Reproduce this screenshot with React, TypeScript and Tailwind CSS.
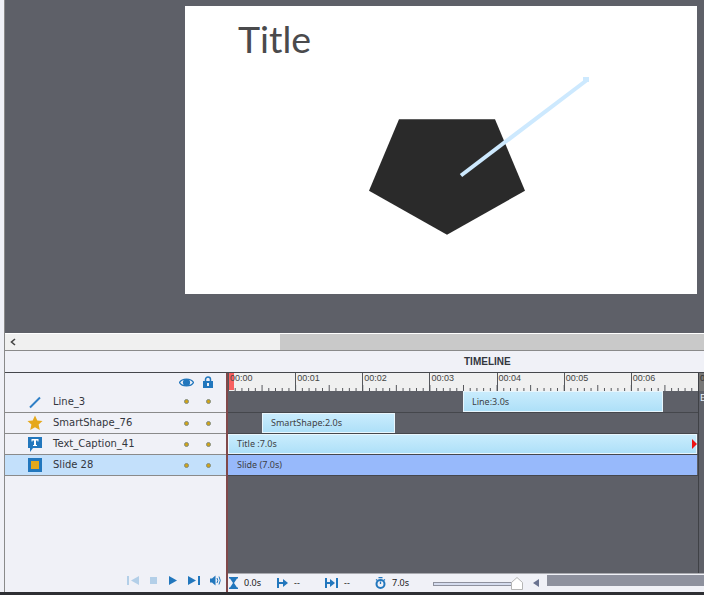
import React from "react";

const uiFont = { fontFamily: '"DejaVu Sans", sans-serif' };
const smallFont = { fontFamily: '"Noto Sans", sans-serif' };

const Dots = () => (
  <div className="ml-auto mr-[15px] flex items-center gap-[17px]">
    <span className="h-[5px] w-[5px] rounded-full border border-[#7f8a80] bg-[#d2a414]" />
    <span className="h-[5px] w-[5px] rounded-full border border-[#7f8a80] bg-[#d2a414]" />
  </div>
);

const LineIcon = () => (
  <svg width="14" height="14" viewBox="0 0 14 14">
    <path d="M2 12.5 L12 2.5" stroke="#2f7fc6" strokeWidth="2" />
  </svg>
);

const StarIcon = () => (
  <svg width="16" height="16" viewBox="0 0 16 16">
    <path d="M8 .5 L10.300 5.500 L15.500 6 L11.600 9.600 L12.800 15 L8 12.200 L3.200 15 L4.400 9.600 L.5 6 L5.700 5.500 Z" fill="#e5a81c" />
  </svg>
);

const CaptionIcon = () => (
  <svg width="16" height="17" viewBox="0 0 16 17">
    <path d="M1 1 H15 V12 H6 L3 16 V12 H1 Z" fill="#2277bd" />
    <path d="M4.5 3 H11.5 V5.5 H10.5 V4.5 H9 V9 H10 V10 H6 V9 H7 V4.5 H5.5 V5.5 H4.5 Z" fill="#fff" />
  </svg>
);

const SlideIcon = () => (
  <div className="flex h-[14px] w-[14px] items-center justify-center bg-[#2277bd]">
    <div className="h-[8px] w-[8px] bg-[#e5a81c]" />
  </div>
);

const rows = [
  { name: "Line_3", icon: <LineIcon />, h: "h-[22px]", selected: false },
  { name: "SmartShape_76", icon: <StarIcon />, h: "h-[21px]", selected: false },
  { name: "Text_Caption_41", icon: <CaptionIcon />, h: "h-[21px]", selected: false },
  { name: "Slide 28", icon: <SlideIcon />, h: "h-[21px]", selected: true },
];

const seconds = ["00:00", "00:01", "00:02", "00:03", "00:04", "00:05", "00:06"];

const Ruler = () => (
  <div className="relative flex h-[18px] w-[470px] shrink-0 bg-[#f0f0f0]">
    <div className="absolute left-0 top-0 h-[17px] w-[6px] bg-[#f86060]" />
    {seconds.map((s) => (
      <div
        key={s}
        className="relative w-[67.14px] shrink-0 border-l border-[#55575c] pl-[1px] text-[9px] leading-[10px] text-[#444]"
        style={{ fontFamily: '"Liberation Sans", sans-serif' }}
      >
        {s}
      </div>
    ))}
    <svg className="absolute bottom-0 left-0" width="470" height="8" viewBox="0 0 470 8">
      {Array.from({ length: 70 }).map((_, i) => (
        <line
          key={i}
          x1={i * 6.714 + 0.5}
          x2={i * 6.714 + 0.5}
          y1={i % 5 === 0 ? 2 : 5}
          y2={8}
          stroke="#55575c"
        />
      ))}
    </svg>
  </div>
);

const Bar = ({ label, className }: { label: string; className: string }) => (
  <div
    className={`flex items-center border border-[#e8f6fd] bg-gradient-to-b from-[#c9ecfd] to-[#aee0f8] pl-[8px] text-[9px] text-[#3d3f45] ${className}`}
    style={smallFont}
  >
    {label}
  </div>
);

const Stat = ({ icon, value, className }: { icon: React.ReactNode; value: string; className: string }) => (
  <div className={`flex items-center gap-[6px] text-[9px] text-[#222] ${className}`} style={smallFont}>
    {icon}
    <span>{value}</span>
  </div>
);

export default function App() {
  return (
    <div className="flex h-[595px] w-[704px] flex-col overflow-hidden bg-[#f0f1f7]" style={uiFont}>
      <div className="flex min-h-0 flex-1 flex-col pl-[4px]">
        <div className="flex min-h-0 flex-1 flex-col border-l border-[#8a8a8a]">
          {/* Stage */}
          <div className="h-[333px] shrink-0 bg-[#5e6068] pl-[180px] pt-[6px]">
            <div className="relative h-[288px] w-[512px] bg-white">
              <div className="pl-[53px] pt-[9px] text-[37.5px] leading-[48px] text-[#4a4a4c]" style={{ fontFamily: '"Lato", sans-serif' }}>
                Title
              </div>
              <svg className="absolute left-0 top-0" width="512" height="288" viewBox="0 0 512 288">
                <polygon points="214,113.300 310,113.300 340,184.700 262,228.700 184,184.700" fill="#2a2a2a" />
                <line x1="276" y1="169.500" x2="402" y2="74" stroke="#cde9fe" strokeWidth="4" />
                <rect x="398" y="71" width="6" height="5" fill="#cde9fe" />
              </svg>
            </div>
          </div>

          {/* Horizontal scroll */}
          <div className="flex h-[17px] shrink-0 items-center border-t border-white bg-[#f0f0f0]">
            <svg className="ml-[4px]" width="8" height="8" viewBox="0 0 8 8">
              <path d="M6 1 L2.500 4 L6 7" fill="none" stroke="#444" strokeWidth="1.600" />
            </svg>
            <div className="ml-[263px] h-full flex-1 bg-[#c9c9c9]" />
          </div>
          <div
            className="h-[23px] shrink-0 border-y border-t-[#8a8a8a] border-b-[#45474c] pl-[459px] text-[10px] font-bold leading-[21px] text-[#33363d]"
            style={{ fontFamily: '"Liberation Sans", sans-serif' }}
          >
            TIMELINE
          </div>

          <div className="flex min-h-0 flex-1">
            {/* Layer list */}
            <div className="flex w-[221px] shrink-0 flex-col">
              <div className="flex h-[18px] shrink-0 items-center justify-end gap-[9px] pr-[13px]">
                <svg width="15" height="11" viewBox="0 0 15 11">
                  <path d="M.5 5.500 C3 1 12 1 14.500 5.500 C12 10 3 10 .5 5.500 Z" fill="none" stroke="#2277bd" strokeWidth="1.300" />
                  <circle cx="7.500" cy="5.500" r="3.600" fill="#2277bd" />
                </svg>
                <svg width="10" height="12" viewBox="0 0 10 12">
                  <path d="M2.500 5 V3.500 A2.500 2.500 0 0 1 7.500 3.500 V5" fill="none" stroke="#2277bd" strokeWidth="1.500" />
                  <rect y="5" width="10" height="7" fill="#2277bd" />
                  <rect x="4" y="7" width="2" height="3" fill="#f0f1f7" />
                </svg>
              </div>
              {rows.map((r) => (
                <div
                  key={r.name}
                  className={`flex ${r.h} shrink-0 items-center border-b border-[#8a8a8a] text-[10px] text-[#33363d] ${r.selected ? "bg-[#c3e0fb]" : ""}`}
                >
                  <div className="flex w-[48px] shrink-0 justify-center pl-[12px]">{r.icon}</div>
                  <span className="-mt-[1px]">{r.name}</span>
                  <Dots />
                </div>
              ))}
              {/* Playback controls */}
              <div className="mt-auto flex h-[19px] shrink-0 items-center justify-end gap-[10px] pb-[4px] pr-[5px]">
                <svg width="12" height="9" viewBox="0 0 12 9" fill="#b3cfe8">
                  <rect width="2" height="9" />
                  <path d="M12 0 V9 L4 4.500 Z" />
                </svg>
                <div className="mx-[1px] h-[7px] w-[7px] bg-[#b3cfe8]" />
                <svg className="mx-[1px]" width="8" height="9" viewBox="0 0 8 9" fill="#2277bd">
                  <path d="M0 0 L8 4.500 L0 9 Z" />
                </svg>
                <svg width="12" height="9" viewBox="0 0 12 9" fill="#2277bd">
                  <path d="M0 0 L8 4.500 L0 9 Z" />
                  <rect x="10" width="2" height="9" />
                </svg>
                <svg width="11" height="11" viewBox="0 0 11 11" fill="#2277bd">
                  <path d="M0 3.500 H2 L5.500 .5 V10.500 L2 7.500 H0 Z" />
                  <path d="M7 3 Q8.500 5.500 7 8 M9 1.500 Q11.500 5.500 9 9.500" fill="none" stroke="#2277bd" />
                </svg>
              </div>
            </div>

            {/* Tracks */}
            <div className="flex min-w-0 flex-1 flex-col border-l-2 border-[#80484a] bg-[#5e6068]">
              <div className="flex min-h-0 flex-1">
                <div className="flex w-[470px] shrink-0 flex-col">
                  <Ruler />
                  <div className="flex h-[22px] shrink-0 border-b border-[#45474c] pl-[235px]">
                    <Bar label="Line:3.0s" className="h-[21px] w-[200px]" />
                  </div>
                  <div className="flex h-[21px] shrink-0 border-b border-[#45474c] pl-[34px]">
                    <Bar label="SmartShape:2.0s" className="h-[20px] w-[133px]" />
                  </div>
                  <div className="relative flex h-[21px] shrink-0 items-center border-b border-[#45474c]">
                    <Bar label="Title :7.0s" className="h-[20px] w-[469px]" />
                    <svg className="absolute left-[464px] top-[5px]" width="5" height="10" viewBox="0 0 5 10">
                      <path d="M0 0 L5 5 L0 10 Z" fill="#ee1111" />
                    </svg>
                  </div>
                  <div className="flex h-[21px] shrink-0 border-b border-[#45474c]">
                    <div className="flex h-[20px] w-[469px] items-center bg-[#97b9fb] pl-[9px] text-[9px] text-[#3d3f45]" style={smallFont}>
                      Slide (7.0s)
                    </div>
                  </div>
                </div>
                {/* Clipped next column */}
                <div className="min-w-0 flex-1 overflow-hidden border-l border-[#3f4146]">
                  <div className="h-[18px] bg-[#777] pl-[1px] text-[9px] leading-[10px] text-[#333]" style={{ fontFamily: '"Liberation Sans", sans-serif' }}>
                    0
                  </div>
                  <div className="pl-[1px] pt-[1px] text-[9px] leading-[12px] text-[#e8f0fa]">E</div>
                </div>
              </div>

              {/* Status strip */}
              <div className="flex h-[19px] shrink-0 items-center border-t border-[#a9aab0] bg-[#f0f1f7]">
                <Stat
                  className="ml-[1px] w-[48px]"
                  value="0.0s"
                  icon={
                    <svg width="9" height="12" viewBox="0 0 9 12" fill="#2277bd">
                      <path d="M0 0 H9 V1.500 H8 L5 6 L8 10.500 H9 V12 H0 V10.500 H1 L4 6 L1 1.500 H0 Z" />
                    </svg>
                  }
                />
                <Stat
                  className="w-[48px]"
                  value="--"
                  icon={
                    <svg width="11" height="10" viewBox="0 0 11 10" fill="#2277bd">
                      <rect width="2" height="10" />
                      <rect x="2" y="4" width="5" height="2" />
                      <path d="M6 1 L11 5 L6 9 Z" />
                    </svg>
                  }
                />
                <Stat
                  className="w-[50px]"
                  value="--"
                  icon={
                    <svg width="13" height="10" viewBox="0 0 13 10" fill="#2277bd">
                      <rect width="2" height="10" />
                      <rect x="2" y="4" width="5" height="2" />
                      <path d="M5 1 L10 5 L5 9 Z" />
                      <rect x="11" width="2" height="10" />
                    </svg>
                  }
                />
                <Stat
                  className="w-[58px]"
                  value="7.0s"
                  icon={
                    <svg width="11" height="12" viewBox="0 0 11 12" fill="none" stroke="#2277bd">
                      <circle cx="5.500" cy="7" r="4" strokeWidth="2" />
                      <path d="M5.500 4.500 V7 M3.500 .7 H7.500 M1 2.500 L2.500 3.500 M10 2.500 L8.500 3.500" strokeWidth="1.300" />
                    </svg>
                  }
                />
                {/* Zoom slider */}
                <div className="flex items-center">
                  <div className="mt-[2px] h-[4px] w-[79px] border border-[#8e919e] bg-[#d5dcee]" />
                  <svg className="-ml-[1px]" width="12" height="13" viewBox="0 0 12 13">
                    <path d="M.5 12.500 V5.500 L6 .5 L11.500 5.500 V12.500 Z" fill="#fff" stroke="#b5b5b5" />
                  </svg>
                </div>
                <svg className="ml-[10px]" width="6" height="8" viewBox="0 0 6 8">
                  <path d="M6 0 V8 L0 4 Z" fill="#6a7390" />
                </svg>
                <div className="ml-[8px] mt-[1px] h-[11px] flex-1 self-start bg-[#8e919e]" />
              </div>
            </div>
          </div>
        </div>
      </div>
      <div className="h-[3px] shrink-0 bg-[#2e2f33]" />
    </div>
  );
}
